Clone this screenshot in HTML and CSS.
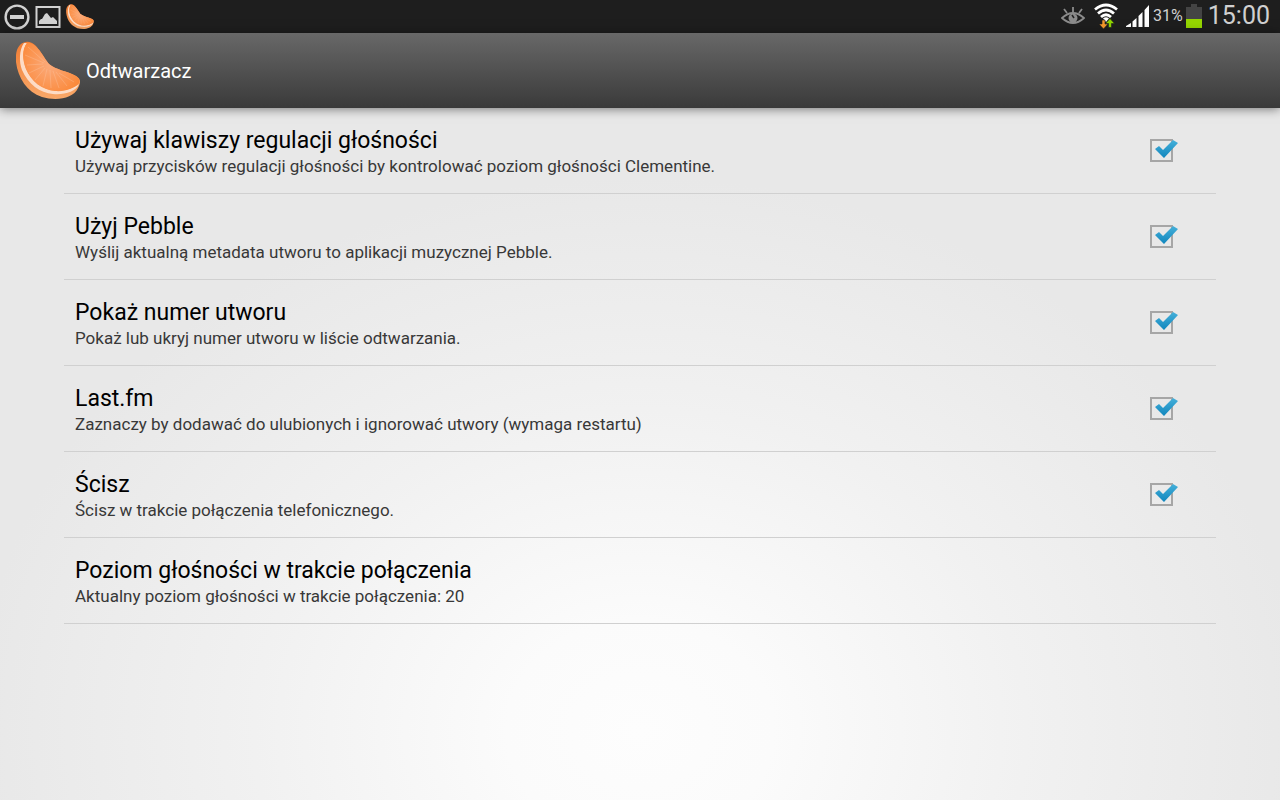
FILE: index.html
```html
<!DOCTYPE html>
<html lang="pl">
<head>
<meta charset="utf-8">
<meta name="viewport" content="width=device-width, initial-scale=1">
<title>Odtwarzacz</title>
<link rel="stylesheet" href="styles.css">
</head>
<body>
<svg class="defs" width="0" height="0" aria-hidden="true">
  <defs>
    <linearGradient id="rind" x1="0" y1="0" x2="0" y2="1">
      <stop offset="0" stop-color="#f07c33"/><stop offset="1" stop-color="#f9a869"/>
    </linearGradient>
    <radialGradient id="flesh" gradientUnits="userSpaceOnUse" cx="34" cy="24" r="34">
      <stop offset="0" stop-color="#fbab7c"/><stop offset="1" stop-color="#fb8838"/>
    </radialGradient>
    <linearGradient id="tick" x1="0" y1="0" x2="0" y2="1">
      <stop offset="0" stop-color="#45b0da"/><stop offset="1" stop-color="#1186bd"/>
    </linearGradient>
    <symbol id="clementine" viewBox="0 0 64 58">
      <path fill="url(#rind)" d="M10 1C2 2-1 11 0 21C2 37 11 51 26 56C40 60 57 58 62 47C65 41 65 38 60 35C51 30 40 29 33 23C27 16 20-1 10 1Z"/>
      <path fill="#fddcc6" d="M8 2C3 9 3 21 6 29C12 43 24 52 37 53C48 54 60 51 63 43C58 47 49 50 40 50C26 49 15 40 10 28C7 19 6 9 11 2Z"/>
      <path fill="url(#flesh)" d="M11 2C6 8 6 18 10 28C15 40 26 49 39 50C49 51 59 47 63 42C64 39 63 37 60 35C51 30 40 29 33 23C27 16 20 0 11 2Z"/>
      <path fill="none" stroke="#fdc7a4" stroke-width="1" opacity=".35" d="M29 21L12 6M28 22L9 14M27 23L11 24M28 25L13 32M29 27L19 39M31 28L27 45M34 29L35 47M37 30L43 47M40 31L51 45M43 32L58 41"/>
    </symbol>
    <symbol id="check" viewBox="0 0 26 22">
      <path fill="url(#tick)" d="M3 11L7 8L11 12L21 2L26 5L12 20Z"/>
    </symbol>
  </defs>
</svg>

<div class="status">
  <div class="status-group">
    <svg class="icon-26" viewBox="0 0 26 26" aria-hidden="true"><circle cx="13" cy="13" r="11.4" fill="none" stroke="#d2d2d2" stroke-width="2.4"/><rect x="6" y="11" width="14" height="4" fill="#d2d2d2"/></svg>
    <svg class="icon-26" viewBox="0 0 26 26" aria-hidden="true"><rect x="1.5" y="3" width="23" height="20" fill="none" stroke="#d2d2d2" stroke-width="2"/><path fill="#d2d2d2" d="M4 20V17L6 15L7 15L10 10L12 9L16 14L18 13L22 17V20Z"/></svg>
    <svg class="icon-fruit" aria-hidden="true"><use href="#clementine"/></svg>
  </div>
  <div class="status-group status-right">
    <svg class="icon-eye" viewBox="0 0 24 20" aria-hidden="true"><path fill="none" stroke="#8c8c8c" stroke-width="1.8" d="M1 12Q12 2 23 12Q12 22 1 12ZM12 6V1M6 7L3 3M18 7L21 3"/><circle cx="12" cy="12" r="4.500" fill="#8c8c8c"/><path d="M11 9L13 12" fill="none" stroke="#222" stroke-width="1.500"/></svg>
    <svg class="icon-wifi" viewBox="0 0 26 26" aria-hidden="true"><g fill="none" stroke="#fff" stroke-width="2.8"><path d="M2 6.500Q13-2.500 24 6.500M5 10.500Q13 3.500 21 10.500M8 14Q13 9.500 18 14"/></g><path fill="#fff" d="M10 15.500Q13 13 16 15.500L13 19Z"/><path fill="#f79a2b" stroke="#1e1e1e" stroke-width=".6" d="M9 17H12V21H15L10.500 26L6 21H9Z"/><path fill="#8fd400" stroke="#1e1e1e" stroke-width=".6" d="M15.500 24.500H18.500V20.500H21.500L17 15.500L12.500 20.500H15.500Z"/></svg>
    <svg class="icon-signal" viewBox="0 0 24 24" aria-hidden="true"><path fill="#fff" d="M0 23V22L5 19V23ZM6.500 23V17.500L10.500 14V23ZM12.500 23V12L16.500 8V23ZM18.500 23V6L23 1V23Z"/></svg>
    <span class="percent">31%</span>
    <svg class="icon-battery" viewBox="0 0 16 24" aria-hidden="true"><path fill="#444" d="M0 3H5V0H11V3H16V24H0Z"/><path fill="#95d600" d="M0 15H16V24H0Z"/></svg>
    <time class="clock">15:00</time>
  </div>
</div>

<header class="bar">
  <svg class="logo" aria-hidden="true"><use href="#clementine"/></svg>
  <h1 class="bar-title">Odtwarzacz</h1>
</header>

<main class="settings">
  <label class="row">
    <span class="text"><span class="title">Używaj klawiszy regulacji głośności</span><span class="summary">Używaj przycisków regulacji głośności by kontrolować poziom głośności Clementine.</span></span>
    <span class="control"><input class="box" type="checkbox" checked><svg class="mark" aria-hidden="true"><use href="#check"/></svg></span>
  </label>
  <label class="row">
    <span class="text"><span class="title">Użyj Pebble</span><span class="summary">Wyślij aktualną metadata utworu to aplikacji muzycznej Pebble.</span></span>
    <span class="control"><input class="box" type="checkbox" checked><svg class="mark" aria-hidden="true"><use href="#check"/></svg></span>
  </label>
  <label class="row">
    <span class="text"><span class="title">Pokaż numer utworu</span><span class="summary">Pokaż lub ukryj numer utworu w liście odtwarzania.</span></span>
    <span class="control"><input class="box" type="checkbox" checked><svg class="mark" aria-hidden="true"><use href="#check"/></svg></span>
  </label>
  <label class="row">
    <span class="text"><span class="title">Last.fm</span><span class="summary">Zaznaczy by dodawać do ulubionych i ignorować utwory (wymaga restartu)</span></span>
    <span class="control"><input class="box" type="checkbox" checked><svg class="mark" aria-hidden="true"><use href="#check"/></svg></span>
  </label>
  <label class="row">
    <span class="text"><span class="title">Ścisz</span><span class="summary">Ścisz w trakcie połączenia telefonicznego.</span></span>
    <span class="control"><input class="box" type="checkbox" checked><svg class="mark" aria-hidden="true"><use href="#check"/></svg></span>
  </label>
  <button class="row" type="button">
    <span class="text"><span class="title">Poziom głośności w trakcie połączenia</span><span class="summary">Aktualny poziom głośności w trakcie połączenia: 20</span></span>
  </button>
</main>
</body>
</html>
```

FILE: styles.css
```css
* {
  box-sizing: border-box;
}

body {
  margin: 0;
  min-height: 100vh;
  display: flex;
  flex-direction: column;
  font-family: Roboto, "Noto Sans", sans-serif;
  background: #e8e8e8;
}

.defs {
  position: absolute;
}

.status {
  display: flex;
  justify-content: space-between;
  align-items: center;
  height: 33px;
  padding: 0 10px 0 4px;
  background: #1e1e1e;
  color: #d0d0d0;
}

.status-group {
  display: flex;
  align-items: center;
  gap: 5px;
}

.status-right {
  gap: 3px;
  padding-bottom: 1px;
}

.icon-26 {
  width: 26px;
  height: 26px;
}

.icon-fruit {
  width: 28px;
  height: 25px;
}

.icon-eye {
  width: 24px;
  height: 20px;
  margin-right: 5px;
}

.icon-wifi {
  width: 26px;
  height: 26px;
  margin-right: 4px;
}

.icon-signal {
  width: 24px;
  height: 24px;
}

.icon-battery {
  width: 16px;
  height: 24px;
}

.percent {
  font-size: 16px;
  line-height: 32px;
}

.clock {
  margin-left: 3px;
  font-size: 25px;
  line-height: 32px;
}

.bar {
  position: relative;
  display: flex;
  align-items: center;
  gap: 6px;
  height: 75px;
  padding: 0 16px 2px;
  background: linear-gradient(#686868, #3a3a3a);
  box-shadow: 0 1px 10px rgba(0, 0, 0, 0.5);
}

.logo {
  width: 64px;
  height: 58px;
}

.bar-title {
  margin: 0;
  padding-top: 2px;
  font-size: 20px;
  font-weight: 400;
  color: #fff;
}

.settings {
  flex: 1;
  padding: 0 5%;
  background: radial-gradient(ellipse 52% 80% at 50% 90%, #fdfdfd 0, #fbfbfb 20%, #f1f1f1 58%, #e8e8e8 100%);
}

.row {
  display: flex;
  justify-content: space-between;
  align-items: center;
  width: 100%;
  padding: 19px 38px 15px 11px;
  border: 0;
  border-bottom: 1px solid #d0d0d0;
  background: none;
  font: inherit;
  text-align: left;
}

.title,
.summary {
  display: block;
}

.title {
  font-size: 23px;
  line-height: 27px;
  color: #000;
}

.summary {
  font-size: 17px;
  line-height: 24px;
  color: #383838;
}

.control {
  position: relative;
  display: flex;
  padding: 0 5px 5px 0;
}

.box {
  appearance: none;
  width: 23px;
  height: 23px;
  margin: 0;
  border: 2px solid #a6a6a6;
}

.mark {
  position: absolute;
  top: -1px;
  right: 0;
  width: 26px;
  height: 22px;
  pointer-events: none;
}

.box:not(:checked) + .mark {
  display: none;
}
```
